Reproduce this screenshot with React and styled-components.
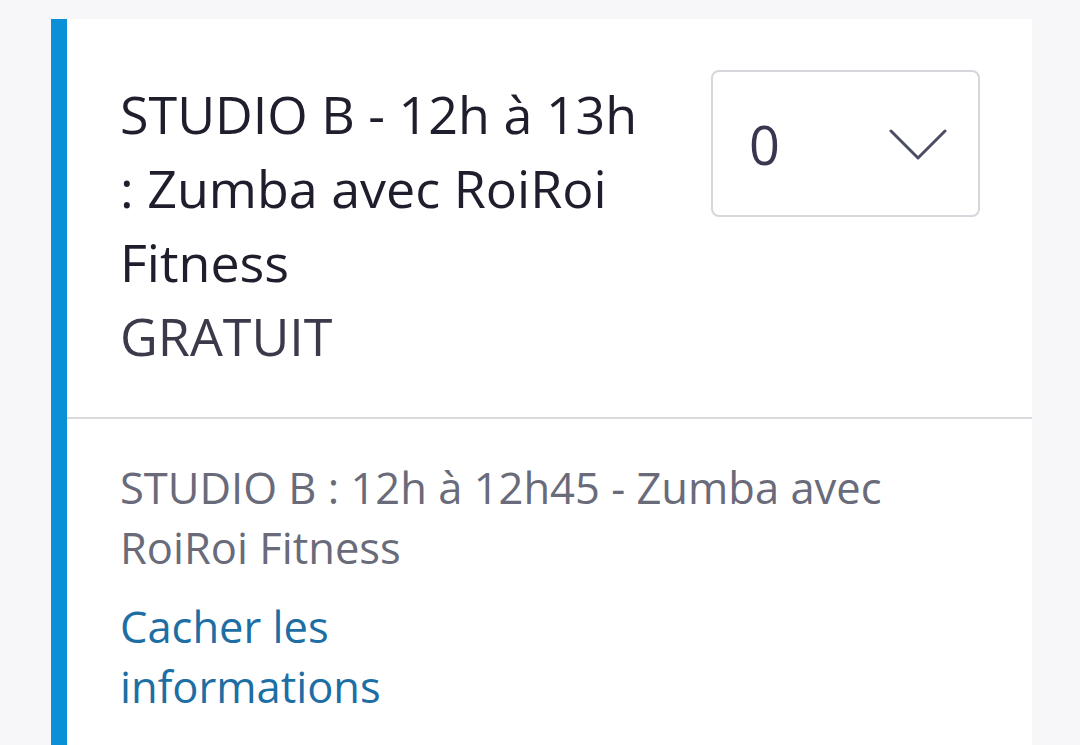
import React, { useState } from "react";
import styled, { createGlobalStyle } from "styled-components";

const GlobalStyle = createGlobalStyle`
  html, body {
    margin: 0;
    padding: 0;
    background: #f7f7f9;
  }
  body {
    font-family: "Open Sans", "Noto Sans", sans-serif;
    -webkit-font-smoothing: antialiased;
  }
`;

const Page = styled.div`
  padding: 19px 48px 0 51px;
  min-height: 745px;
  box-sizing: border-box;
`;

const Card = styled.div`
  background: #ffffff;
  border-left: 16px solid #0b8fd6;
  min-height: 726px;
`;

const Header = styled.div`
  display: flex;
  align-items: flex-start;
  justify-content: space-between;
  padding: 51px 52px 44px 53px;
  border-bottom: 2px solid #d8d8dd;
`;

const TitleBlock = styled.div`
  width: 526px;
  padding-top: 7px;
  font-size: 52px;
  line-height: 74px;
  color: #1e1e2d;
`;

const Price = styled.div`
  color: #3a3a4a;
`;

const SelectBox = styled.label`
  position: relative;
  display: flex;
  align-items: center;
  flex-shrink: 0;
  width: 269px;
  height: 147px;
  box-sizing: border-box;
  border: 2px solid #d6d6dc;
  border-radius: 8px;
  cursor: pointer;
`;

const NativeSelect = styled.select`
  appearance: none;
  width: 100%;
  height: 100%;
  border: 0;
  background: transparent;
  padding: 0 0 0 36px;
  font-family: inherit;
  font-size: 54px;
  color: #39364f;
  outline: none;
  cursor: pointer;
`;

const Chevron = styled.svg`
  position: absolute;
  right: 31px;
  top: 57px;
  pointer-events: none;
`;

const Info = styled.div`
  padding: 39px 52px 40px 53px;
`;

const Description = styled.p`
  margin: 0;
  font-size: 43.5px;
  line-height: 60px;
  color: #6a6b7a;
`;

const ToggleLink = styled.a`
  display: block;
  margin-top: 19px;
  width: 300px;
  font-size: 43.5px;
  line-height: 60px;
  color: #1c6ea4;
  text-decoration: none;
  cursor: pointer;
`;

export default function App() {
  const [qty, setQty] = useState("0");
  const [open, setOpen] = useState(true);

  return (
    <>
      <GlobalStyle />
      <Page>
        <Card>
          <Header>
            <TitleBlock>
              STUDIO B - 12h à 13h : Zumba avec RoiRoi Fitness
              <Price>GRATUIT</Price>
            </TitleBlock>
            <SelectBox>
              <NativeSelect value={qty} onChange={e => setQty(e.target.value)}>
                {[0, 1, 2, 3, 4, 5].map(n => (
                  <option key={n} value={n}>
                    {n}
                  </option>
                ))}
              </NativeSelect>
              <Chevron width="58" height="32" viewBox="0 0 58 32" fill="none">
                <path
                  d="M2 2 L29 29 L56 2"
                  stroke="#4b4d63"
                  strokeWidth="3"
                  strokeLinecap="round"
                  strokeLinejoin="round"
                />
              </Chevron>
            </SelectBox>
          </Header>
          <Info>
            {open && (
              <Description>
                STUDIO B : 12h à 12h45 - Zumba avec RoiRoi Fitness
              </Description>
            )}
            <ToggleLink onClick={() => setOpen(!open)}>
              {open ? "Cacher les informations" : "Afficher les informations"}
            </ToggleLink>
          </Info>
        </Card>
      </Page>
    </>
  );
}
